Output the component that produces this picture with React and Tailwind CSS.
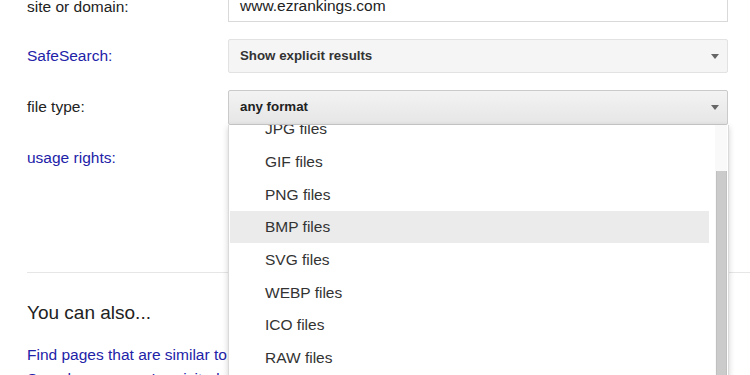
import React from 'react';

const fileTypes = ['JPG files', 'GIF files', 'PNG files', 'BMP files', 'SVG files', 'WEBP files', 'ICO files', 'RAW files', 'TIFF files'];

const Arrow = () => (
  <span className="w-0 h-0 border-l-[4.5px] border-r-[4.5px] border-t-[5px] border-l-transparent border-r-transparent border-t-[#666]" />
);

const App = () => (
  <div className="w-[750px] h-[375px] overflow-hidden bg-white font-['Liberation_Sans',Arial,sans-serif] text-[15.5px] text-[#222]">
    <div className="pl-[27px] -mt-[12px] flex flex-col gap-[17px]">
      {/* site or domain */}
      <div className="flex items-center h-[34px]">
        <label className="w-[201px] pt-[4px]">site or domain:</label>
        <div className="w-[500px] h-[34px] border border-[#d9d9d9] bg-white flex items-center pl-[11px] pt-[2px]">
          www.ezrankings.com
        </div>
      </div>

      {/* SafeSearch */}
      <div className="flex items-center h-[34px]">
        <label className="w-[201px] text-[#2222a8]">SafeSearch:</label>
        <div className="w-[500px] h-[34px] border border-[#e2e2e2] rounded-[2px] bg-[#f5f5f5] flex items-center justify-between pl-[11px] pr-[8px]">
          <span className="font-bold text-[13.3px] text-[#333]">Show explicit results</span>
          <Arrow />
        </div>
      </div>

      {/* file type */}
      <div className="flex items-center h-[34px]">
        <label className="w-[201px]">file type:</label>
        <div className="relative w-[500px] h-[35px]">
          <div className="h-full border border-[#cacaca] rounded-[2px] bg-gradient-to-b from-[#f3f3f3] to-[#e6e6e6] flex items-center justify-between pl-[11px] pr-[8px]">
            <span className="font-bold text-[13.3px] text-[#222]">any format</span>
            <Arrow />
          </div>

          {/* open dropdown list */}
          <div className="absolute left-0 top-[35px] w-[501px] h-[300px] overflow-hidden bg-white border-l border-r border-[#dadada] shadow-[0_2px_6px_rgba(0,0,0,0.18)] z-10">
            <ul className="-mt-[12px] w-[480px] pl-[1px]">
              {fileTypes.map((t) => (
                <li
                  key={t}
                  className={`h-[32.7px] flex items-center pl-[35px] text-[#333] ${t === 'BMP files' ? 'bg-[#ebebeb]' : ''}`}
                >
                  {t}
                </li>
              ))}
            </ul>
            <div className="absolute right-[1px] top-0 bottom-0 w-[12px] bg-[#f9f9f9]">
              <div className="mt-[46px] mx-auto w-[11px] h-[260px] bg-[#cbcbcb] border-x border-[#c0c0c0]" />
            </div>
          </div>
        </div>
      </div>

      {/* usage rights */}
      <div className="flex items-center h-[34px]">
        <label className="w-[201px] text-[#2222a8]">usage rights:</label>
        <div className="w-[500px] h-[34px] bg-[#f5f5f5]" />
      </div>
    </div>

    <div className="ml-[27px] mt-[97px] border-t border-[#e6e6e6]" />

    <div className="pl-[27px]">
      <h2 className="mt-[29px] text-[19px] leading-[22px] text-[#222]">You can also...</h2>
      <div className="mt-[19px] flex flex-col text-[#2222a8] leading-[24px]">
        <a>Find pages that are similar to, or link to, a URL</a>
        <a>Search pages you've visited</a>
        <a>Use operators in the search box</a>
      </div>
    </div>
  </div>
);

export default App;
